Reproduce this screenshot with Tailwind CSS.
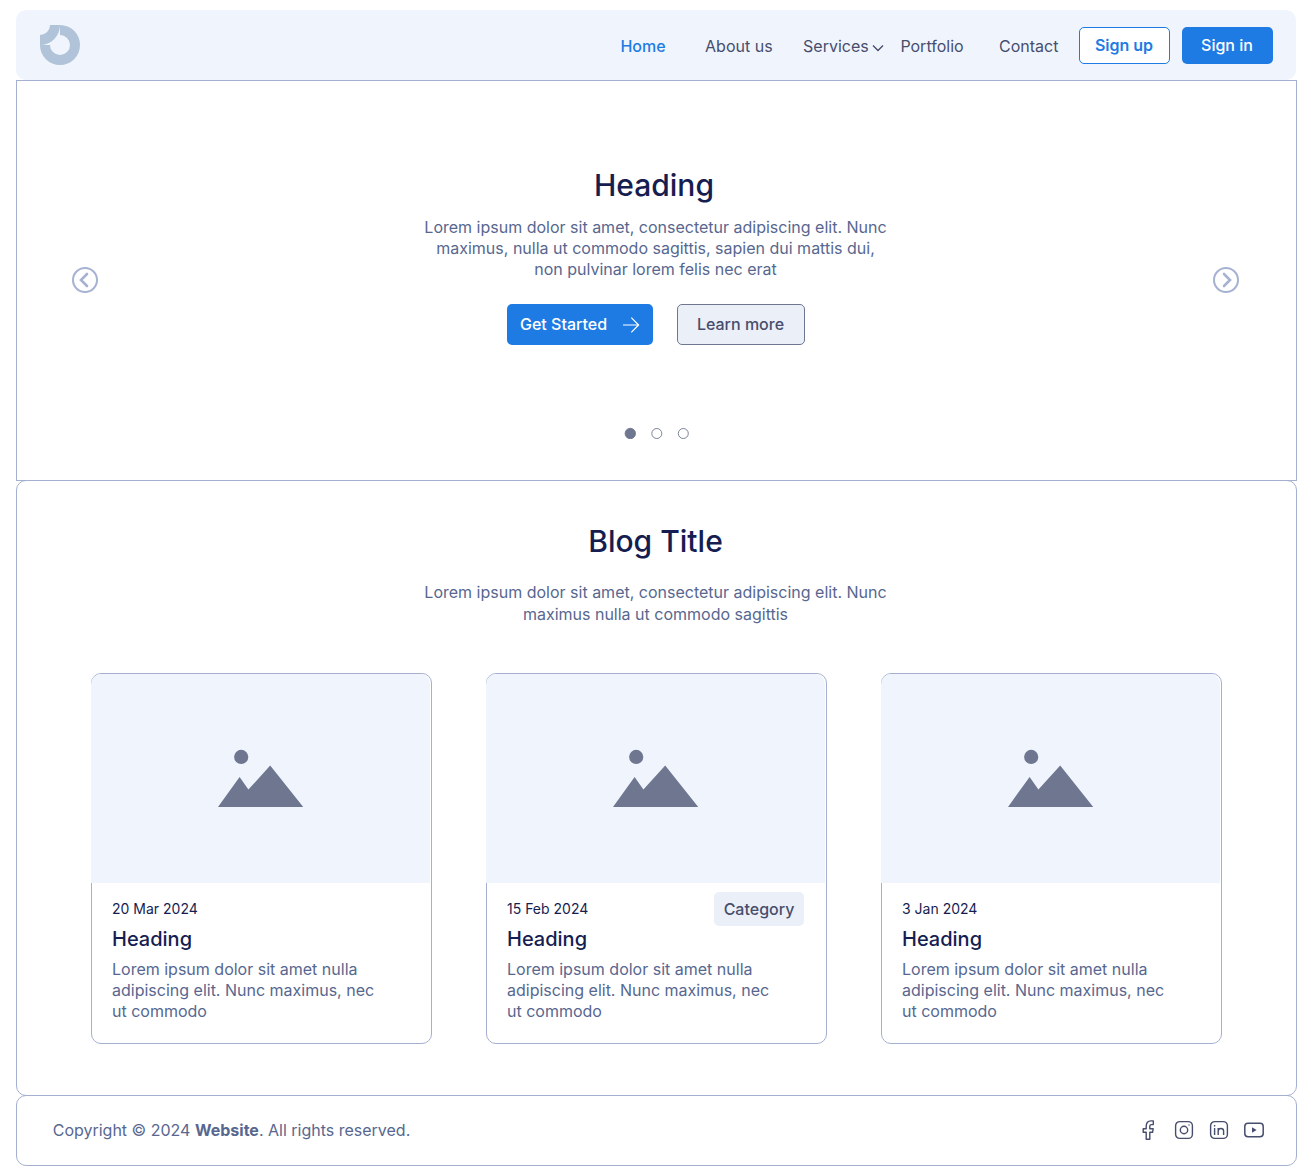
<!DOCTYPE html>
<html lang="en">
<head>
<meta charset="utf-8">
<title>Website</title>
<script src="https://cdn.jsdelivr.net/npm/@tailwindcss/browser@4"></script>
</head>
<body class="bg-white font-['Inter',sans-serif] text-base text-[#57678f] pt-[10px] pl-4">
<svg class="hidden">
  <symbol id="picture" viewBox="0 0 86 58"><circle cx="23.2" cy="7.9" r="7.1"/><path d="M-.2 58.2 21.6 28 30.4 40.6 52.2 16.5 85.4 58.2Z"/></symbol>
</svg>
<header class="flex h-[70px] w-[1280px] items-center rounded-[10px] bg-[#f0f5fd] pr-5 pl-6">
  <svg class="size-10 shrink-0" viewBox="0 0 40 40" fill="#b0c3d8"><path d="M20 0A20 20 0 1 1 0 20H10A10 10 0 1 0 20 10Z"/><path d="M10 0H20A20 20 0 0 1 0 20V10A10 10 0 0 0 10 0Z"/></svg>
  <nav class="ml-[540.4px] flex w-[458.6px] shrink-0 pt-px text-[#474d6d]">
    <a class="w-[84.7px] shrink-0 font-medium text-[#1e7be3]">Home</a>
    <a class="w-[98px] shrink-0">About us</a>
    <a class="flex w-[97.3px] shrink-0 items-center">Services<svg class="ml-[3px] mt-1 h-2 w-3 shrink-0" viewBox="0 0 12 8" fill="none" stroke="#474d6d" stroke-width="1.4"><path d="M1 1.5 6 6.5 11 1.5"/></svg></a>
    <a class="w-[98.7px] shrink-0">Portfolio</a>
    <a>Contact</a>
  </nav>
  <a class="flex h-[37px] w-[91px] shrink-0 items-center justify-center rounded-[5px] border border-[#1e7be3] bg-white pr-px font-semibold text-[#1e7be3]">Sign up</a>
  <a class="ml-3 flex h-[37px] w-[91px] shrink-0 items-center justify-center rounded-[5px] bg-[#1e7be3] pr-px font-medium text-white">Sign in</a>
</header>

<section class="flex h-[401px] w-[1281px] items-center justify-between border border-[#a5b0d0] pr-[56px] pl-[54px]">
  <svg class="mb-0.5 size-7" viewBox="0 0 28 28" fill="none" stroke="#a7b2d3" stroke-width="2"><circle cx="14" cy="14" r="12"/><path d="M16 8 10 14 16 20" stroke-width="2.6" stroke-linecap="round"/></svg>
  <div class="flex h-full flex-col items-center pt-[82px]">
    <h1 class="pr-[3px] text-[30px] leading-[44px] font-medium text-[#161d51]">Heading</h1>
    <p class="mt-2.5 text-center leading-[21px]">Lorem ipsum dolor sit amet, consectetur adipiscing elit. Nunc<br>maximus, nulla ut commodo sagittis, sapien dui mattis dui,<br>non pulvinar lorem felis nec erat</p>
    <div class="mt-6 ml-px flex gap-6 font-medium">
      <a class="flex h-[41px] w-[146px] items-center justify-between rounded-[5px] bg-[#1e7be3] px-[13px] text-white"><span class="pb-px">Get Started</span><svg class="h-4 w-[17px]" viewBox="0 0 17 16" fill="none" stroke="#fff" stroke-width="1.2"><path d="M0 8H16M8.3.7 15.6 8 8.3 15.3"/></svg></a>
      <a class="flex h-[41px] w-[128px] items-center justify-center rounded-[5px] border border-[#6e7690] bg-[#ebf0f8] pr-px pb-0.5 text-[#474d6d]">Learn more</a>
    </div>
    <svg class="mt-[82px] ml-1 h-3 w-[66px]" viewBox="0 0 66 12" fill="none" stroke="#6e7690" stroke-width=".9"><circle cx="6.3" cy="6.5" r="5.2" fill="#6e7690"/><circle cx="32.8" cy="6.5" r="5"/><circle cx="59.3" cy="6.5" r="5"/></svg>
  </div>
  <svg class="mb-0.5 size-7" viewBox="0 0 28 28" fill="none" stroke="#a7b2d3" stroke-width="2"><circle cx="14" cy="14" r="12"/><path d="M12 8 18 14 12 20" stroke-width="2.6" stroke-linecap="round"/></svg>
</section>

<section class="-mt-px h-[616px] w-[1281px] rounded-[10px] border border-[#a5b0d0] px-[74px] pt-[38px] text-center">
  <h2 class="pr-0.5 text-[30px] leading-[44px] font-medium text-[#161d51]">Blog Title</h2>
  <p class="mt-[18px] pr-0.5 leading-[22px]">Lorem ipsum dolor sit amet, consectetur adipiscing elit. Nunc<br>maximus nulla ut commodo sagittis</p>
  <div class="mt-12 flex gap-[54px] text-left">
    <article class="h-[371px] w-[341px] rounded-[10px] border border-[#a5b0d0]">
      <div class="-ml-px flex h-[209px] w-[339px] items-center justify-center rounded-t-[10px] bg-[#f0f5fd] pb-px"><svg class="h-[58px] w-[86px] overflow-visible fill-[#6e7690]"><use href="#picture"/></svg></div>
      <div class="px-5 pt-4">
        <time class="block text-sm text-[#161d51]">20 Mar 2024</time>
        <h3 class="mt-1.5 text-xl font-medium text-[#161d51]">Heading</h3>
        <p class="mt-1.5 leading-[21px]">Lorem ipsum dolor sit amet nulla<br>adipiscing elit. Nunc maximus, nec<br>ut commodo</p>
      </div>
    </article>
    <article class="h-[371px] w-[341px] rounded-[10px] border border-[#a5b0d0]">
      <div class="-ml-px flex h-[209px] w-[339px] items-center justify-center rounded-t-[10px] bg-[#f0f5fd] pb-px"><svg class="h-[58px] w-[86px] overflow-visible fill-[#6e7690]"><use href="#picture"/></svg></div>
      <div class="px-5 pt-4">
        <div class="flex h-5 items-center justify-between"><time class="text-sm text-[#161d51]">15 Feb 2024</time><span class="mr-0.5 flex h-[34px] w-[90px] shrink-0 items-center justify-center rounded-[5px] bg-[#ebf0f8] font-medium text-[#474d6d]">Category</span></div>
        <h3 class="mt-1.5 text-xl font-medium text-[#161d51]">Heading</h3>
        <p class="mt-1.5 leading-[21px]">Lorem ipsum dolor sit amet nulla<br>adipiscing elit. Nunc maximus, nec<br>ut commodo</p>
      </div>
    </article>
    <article class="h-[371px] w-[341px] rounded-[10px] border border-[#a5b0d0]">
      <div class="-ml-px flex h-[209px] w-[339px] items-center justify-center rounded-t-[10px] bg-[#f0f5fd] pb-px"><svg class="h-[58px] w-[86px] overflow-visible fill-[#6e7690]"><use href="#picture"/></svg></div>
      <div class="px-5 pt-4">
        <time class="block text-sm text-[#161d51]">3 Jan 2024</time>
        <h3 class="mt-1.5 text-xl font-medium text-[#161d51]">Heading</h3>
        <p class="mt-1.5 leading-[21px]">Lorem ipsum dolor sit amet nulla<br>adipiscing elit. Nunc maximus, nec<br>ut commodo</p>
      </div>
    </article>
  </div>
</section>

<footer class="-mt-px flex h-[71px] w-[1281px] items-center justify-between rounded-[10px] border border-[#a5b0d0] pr-8 pb-0.5 pl-[35.7px]">
  <p>Copyright © 2024 <b class="font-bold">Website</b>. All rights reserved.</p>
  <div class="flex items-center">
    <svg class="mr-4 h-5 w-5" viewBox="0 0 20 20" fill="none" stroke="#474d6d" stroke-width="1.4" stroke-linejoin="round"><path d="M8.2 19.2V12.3H5.2V8.7H8.2V6.2C8.2 2.9 10 .9 13 .9H15.3V4.6H13.4C12.2 4.6 11.8 5.2 11.8 6.3V8.7H15.2L14.6 12.3H11.8V19.2Z"/></svg>
    <svg class="mr-[15px] h-5 w-5" viewBox="0 0 20 20" fill="none" stroke="#474d6d" stroke-width="1.4"><rect x="1.6" y="1.6" width="16.8" height="16.8" rx="4.2"/><circle cx="10" cy="10" r="3.7"/><circle cx="15" cy="5" r=".7" fill="#474d6d" stroke="none"/></svg>
    <svg class="mr-[15px] h-5 w-5" viewBox="0 0 20 20" fill="none" stroke="#474d6d" stroke-width="1.4"><rect x="1.6" y="1.6" width="16.8" height="16.8" rx="4.2"/><path d="M5.6 8V15M5.6 5V6.4M9.2 15V8M9.2 11C9.2 7.6 14.6 7.6 14.6 11V15"/></svg>
    <svg class="h-5 w-5" viewBox="0 0 20 20" fill="none" stroke="#474d6d" stroke-width="1.5"><rect x=".8" y="3.3" width="18.4" height="13.4" rx="3.2"/><path d="M8 7.3 12.6 10 8 12.7Z" fill="#474d6d" stroke="none"/></svg>
  </div>
</footer>
</body>
</html>
